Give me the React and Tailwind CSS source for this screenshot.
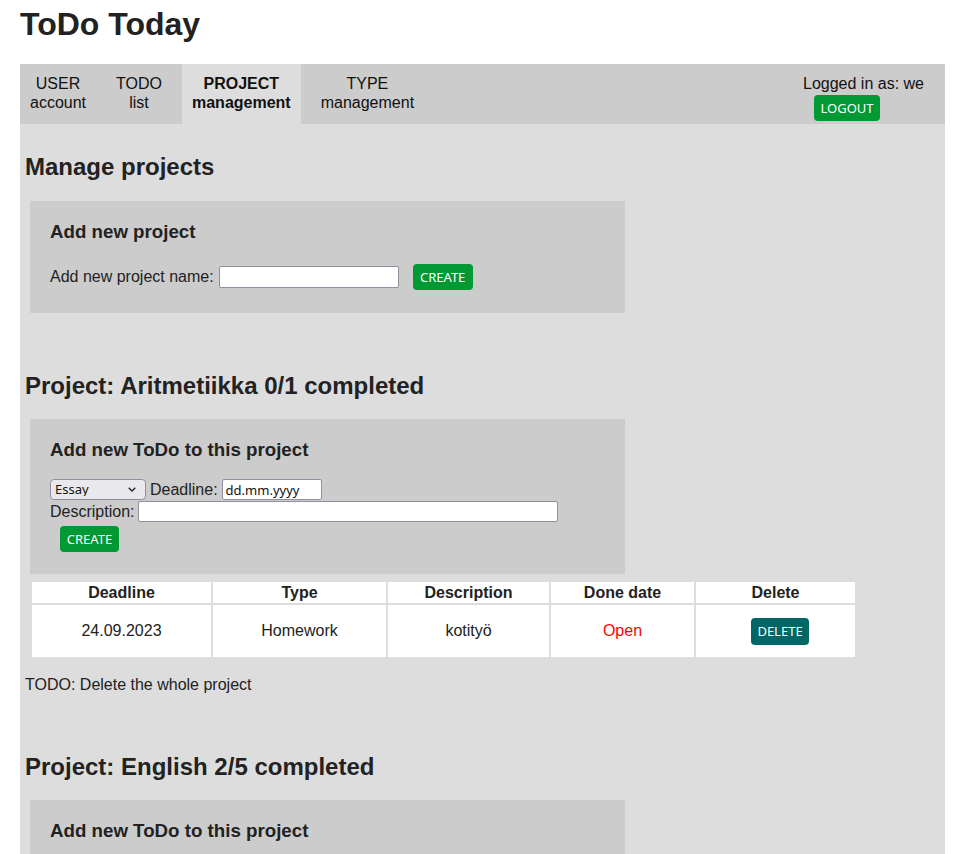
import React from "react";

const navItems = [
  { top: "USER", bottom: "account" },
  { top: "TODO", bottom: "list" },
  { top: "PROJECT", bottom: "management", active: true },
  { top: "TYPE", bottom: "management" },
];

const types = ["Essay", "Homework", "Reading", "Exam"];

const englishTodos = [
  { deadline: "12.09.2023", type: "Essay", description: "My summer", done: "15.09.2023" },
  { deadline: "18.09.2023", type: "Homework", description: "Irregular verbs", done: "17.09.2023" },
  { deadline: "25.09.2023", type: "Reading", description: "Chapter 3", done: null },
];

const GreenButton = ({ children, className = "" }) => (
  <button
    className={`h-[26px] px-[6px] rounded-[4px] bg-[#009933] text-white text-[13px] font-['Noto_Sans',sans-serif] leading-none ${className}`}
  >
    {children}
  </button>
);

const TypeSelect = () => (
  <div className="relative w-[96px] h-[21px]">
    <select
      defaultValue="Essay"
      className="appearance-none w-full h-full bg-[#e9e9ed] border border-[#8f8f9d] rounded-[4px] pl-[4px] text-[13px] leading-none text-[#111] font-['Noto_Sans',sans-serif]"
    >
      {types.map((t) => (
        <option key={t}>{t}</option>
      ))}
    </select>
    <svg
      className="absolute right-[10px] top-[8px] pointer-events-none"
      width="8"
      height="5"
      viewBox="0 0 8 5"
      fill="none"
    >
      <path d="M0.7 0.7 L4 4 L7.3 0.7" stroke="#222" strokeWidth="1.3" />
    </svg>
  </div>
);

const AddTodoBox = () => (
  <div className="ml-[5px] mt-[19px] w-[595px] bg-[#ccc] px-[20px] pt-[20px] pb-[22px]">
    <h3 className="text-[18.72px] leading-[22px] font-bold">Add new ToDo to this project</h3>
    <div className="mt-[18px] flex items-center h-[21px]">
      <TypeSelect />
      <span className="ml-[4px]">Deadline:</span>
      <input
        type="text"
        defaultValue="dd.mm.yyyy"
        className="ml-[4px] w-[100px] h-[21px] bg-white border border-[#8f8f9d] rounded-[2px] px-[3px] text-[13px] text-[#111] font-['Noto_Sans',sans-serif]"
      />
    </div>
    <div className="mt-[1px] flex items-center h-[21px]">
      <span>Description:</span>
      <input
        type="text"
        className="ml-[4px] w-[420px] h-[21px] bg-white border border-[#8f8f9d] rounded-[2px]"
      />
    </div>
    <GreenButton className="mt-[4px] ml-[10px] w-[59px]">CREATE</GreenButton>
  </div>
);

const TodoTable = ({ rows }) => (
  <table className="ml-[5px] mt-[6px] border-separate border-spacing-[2px] leading-[18px]">
    <thead>
      <tr className="bg-white font-bold">
        <th className="w-[179px] h-[21px] p-0 font-bold">Deadline</th>
        <th className="w-[173px] p-0 font-bold">Type</th>
        <th className="w-[161px] p-0 font-bold">Description</th>
        <th className="w-[143px] p-0 font-bold">Done date</th>
        <th className="w-[159px] p-0 font-bold">Delete</th>
      </tr>
    </thead>
    <tbody>
      {rows.map((r, i) => (
        <tr key={i} className="bg-white text-center">
          <td className="h-[52px] p-0">{r.deadline}</td>
          <td className="p-0">{r.type}</td>
          <td className="p-0">{r.description}</td>
          <td className={`p-0 ${r.done ? "" : "text-[#ff0000]"}`}>{r.done || "Open"}</td>
          <td className="p-0">
            <button className="ml-[9px] w-[58px] h-[27px] rounded-[4px] bg-[#006666] text-white text-[13px] font-['Noto_Sans',sans-serif] leading-none">
              DELETE
            </button>
          </td>
        </tr>
      ))}
    </tbody>
  </table>
);

export default function App() {
  return (
    <div className="min-h-screen bg-white text-[#222] text-[16px] leading-[18px] font-['Liberation_Sans',Arial,sans-serif]">
      <h1 className="pt-[6px] pl-[20px] text-[32px] leading-[37px] font-bold">ToDo Today</h1>

      {/* Navigation */}
      <nav className="mt-[21px] ml-[20px] w-[925px] h-[60px] bg-[#ccc] flex leading-[19px] text-[#111]">
        <div className="flex gap-[10px]">
          {navItems.map((item) => (
            <div
              key={item.top + item.bottom}
              className={`px-[10px] pt-[10px] h-[60px] text-center ${item.active ? "bg-[#ddd] font-bold" : ""}`}
            >
              <div>{item.top}</div>
              <div>{item.bottom}</div>
            </div>
          ))}
        </div>
        <div className="ml-auto pr-[21px] pt-[10px]">
          <div>Logged in as: we</div>
          <GreenButton className="mt-[2px] ml-[11px] w-[66px]">LOGOUT</GreenButton>
        </div>
      </nav>

      {/* Content */}
      <main className="ml-[20px] w-[925px] bg-[#ddd] px-[5px] pt-[29px] pb-[40px]">
        <h2 className="text-[24px] leading-[28px] font-bold">Manage projects</h2>
        <div className="ml-[5px] mt-[20px] w-[595px] h-[112px] bg-[#ccc] px-[20px] pt-[20px]">
          <h3 className="text-[18.72px] leading-[22px] font-bold">Add new project</h3>
          <div className="mt-[21px] flex items-center h-[26px]">
            <span>Add new project name:</span>
            <input
              type="text"
              className="ml-[5px] w-[180px] h-[22px] bg-white border border-[#8f8f9d] rounded-[2px]"
            />
            <GreenButton className="ml-[14px] w-[60px]">CREATE</GreenButton>
          </div>
        </div>

        <h2 className="mt-[59px] text-[24px] leading-[28px] font-bold">Project: Aritmetiikka 0/1 completed</h2>
        <AddTodoBox />
        <TodoTable rows={[{ deadline: "24.09.2023", type: "Homework", description: "kotityö", done: null }]} />
        <p className="mt-[17px] leading-[18px]">TODO: Delete the whole project</p>

        <h2 className="mt-[59px] text-[24px] leading-[28px] font-bold">Project: English 2/5 completed</h2>
        <AddTodoBox />
        <TodoTable rows={englishTodos} />
        <p className="mt-[17px] leading-[18px]">TODO: Delete the whole project</p>
      </main>
    </div>
  );
}
